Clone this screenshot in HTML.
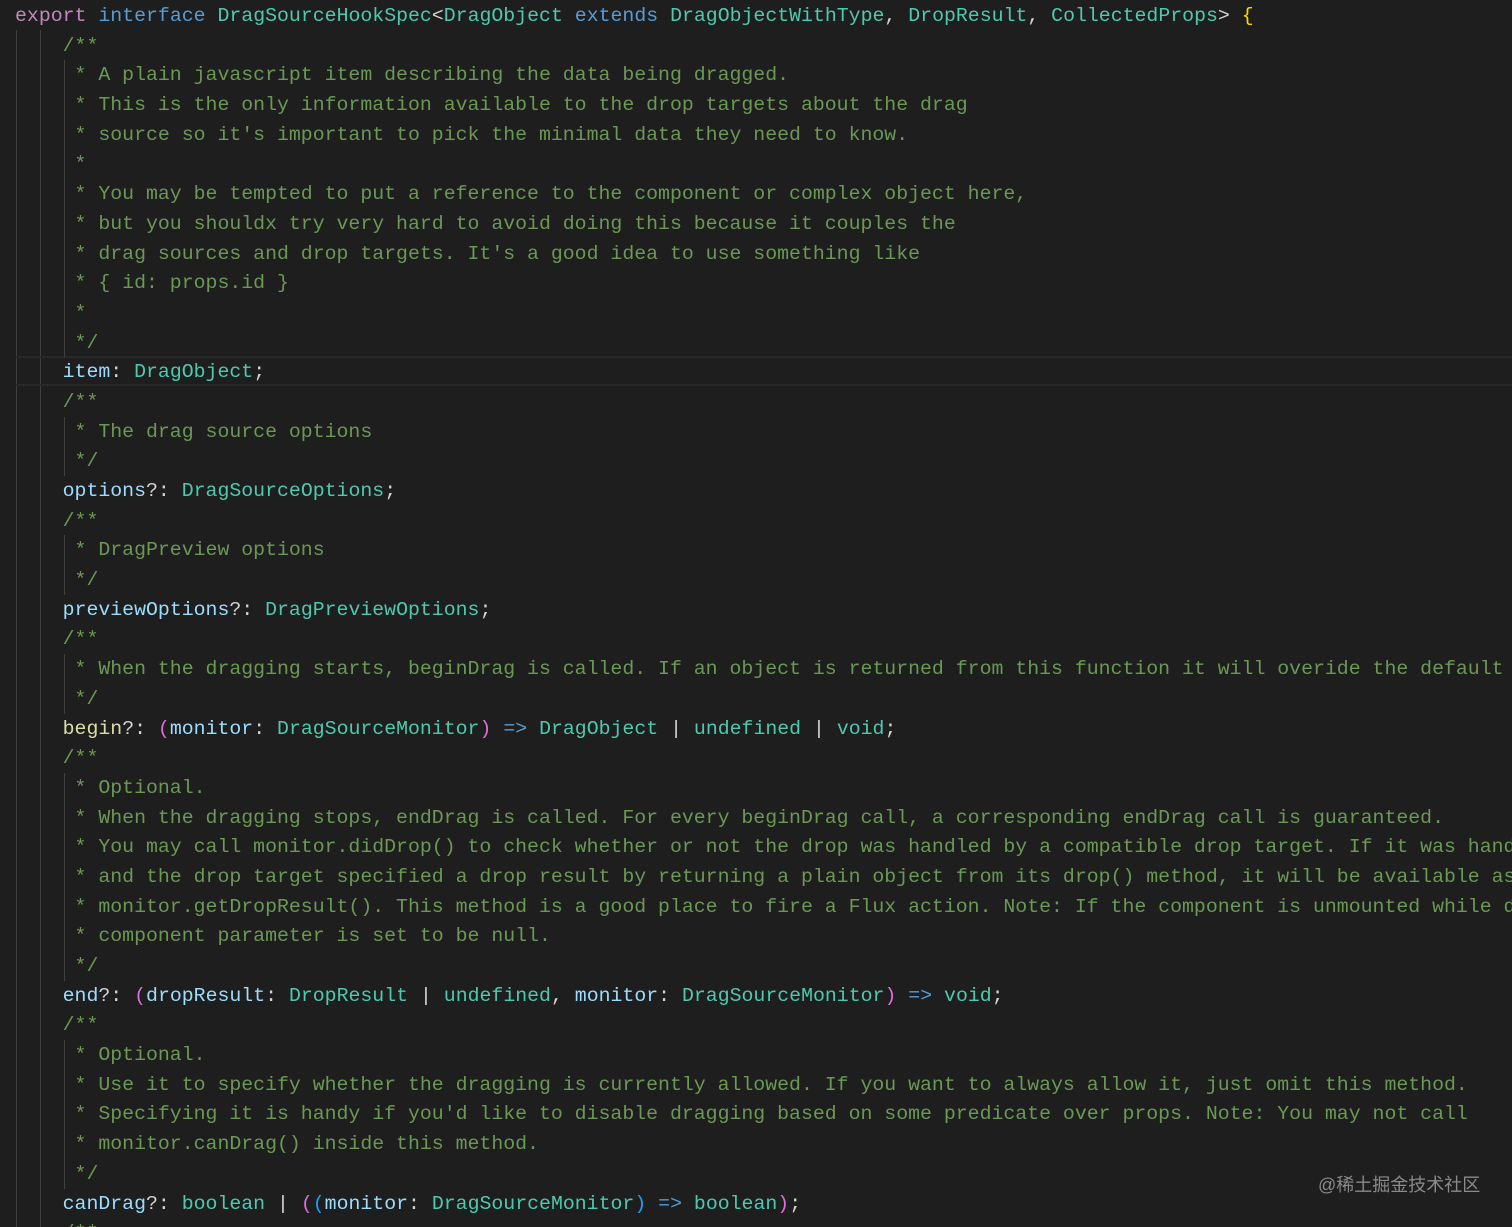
<!DOCTYPE html>
<html><head><meta charset="utf-8"><style>
html,body{margin:0;padding:0;background:#1e1e1e;width:1512px;height:1227px;overflow:hidden;position:relative}
#c{position:absolute;left:15px;top:1px;right:0;height:1226px;overflow:hidden;font-family:"Liberation Mono",monospace;font-size:19.85px;color:#d4d4d4}
.l{height:29.7px;line-height:29.7px;white-space:pre;position:relative}
.g{position:absolute;top:0;bottom:0;width:1px;background:#404040}
.cm{color:#6a9955}.kw{color:#c586c0}.bl{color:#569cd6}.ty{color:#4ec9b0}.pr{color:#9cdcfe}.fn{color:#dcdcaa}.br{color:#ffd700}.pk{color:#da70d6}.b2{color:#179fff}
.cur{position:absolute;left:16px;right:0;top:356px;height:30px;border-top:2px solid #282828;border-bottom:2px solid #282828;box-sizing:border-box}
#wm{position:absolute;left:1318px;top:1171px;font-family:"Liberation Sans","Noto Sans CJK SC",sans-serif;font-size:18px;color:#8a8a8a}
</style></head><body>
<div style="position:absolute;left:16px;top:30px;bottom:0;width:1px;background:#404040"></div>
<div style="position:absolute;left:40px;top:30px;bottom:0;width:1px;background:#404040"></div>
<div class="cur"></div>
<div id="c">
<div class="l"><span class="kw">export</span> <span class="bl">interface</span> <span class="ty">DragSourceHookSpec</span>&lt;<span class="ty">DragObject</span> <span class="bl">extends</span> <span class="ty">DragObjectWithType</span>, <span class="ty">DropResult</span>, <span class="ty">CollectedProps</span>&gt; <span class="br">{</span></div>
<div class="l cm">    /**</div>
<div class="l cm"><i class="g" style="left:49px"></i>     * A plain javascript item describing the data being dragged.</div>
<div class="l cm"><i class="g" style="left:49px"></i>     * This is the only information available to the drop targets about the drag</div>
<div class="l cm"><i class="g" style="left:49px"></i>     * source so it's important to pick the minimal data they need to know.</div>
<div class="l cm"><i class="g" style="left:49px"></i>     *</div>
<div class="l cm"><i class="g" style="left:49px"></i>     * You may be tempted to put a reference to the component or complex object here,</div>
<div class="l cm"><i class="g" style="left:49px"></i>     * but you shouldx try very hard to avoid doing this because it couples the</div>
<div class="l cm"><i class="g" style="left:49px"></i>     * drag sources and drop targets. It's a good idea to use something like</div>
<div class="l cm"><i class="g" style="left:49px"></i>     * { id: props.id }</div>
<div class="l cm"><i class="g" style="left:49px"></i>     *</div>
<div class="l cm"><i class="g" style="left:49px"></i>     */</div>
<div class="l">    <span class="pr">item</span>: <span class="ty">DragObject</span>;</div>
<div class="l cm">    /**</div>
<div class="l cm"><i class="g" style="left:49px"></i>     * The drag source options</div>
<div class="l cm"><i class="g" style="left:49px"></i>     */</div>
<div class="l">    <span class="pr">options</span>?: <span class="ty">DragSourceOptions</span>;</div>
<div class="l cm">    /**</div>
<div class="l cm"><i class="g" style="left:49px"></i>     * DragPreview options</div>
<div class="l cm"><i class="g" style="left:49px"></i>     */</div>
<div class="l">    <span class="pr">previewOptions</span>?: <span class="ty">DragPreviewOptions</span>;</div>
<div class="l cm">    /**</div>
<div class="l cm"><i class="g" style="left:49px"></i>     * When the dragging starts, beginDrag is called. If an object is returned from this function it will overide the default</div>
<div class="l cm"><i class="g" style="left:49px"></i>     */</div>
<div class="l">    <span class="fn">begin</span>?: <span class="pk">(</span><span class="pr">monitor</span>: <span class="ty">DragSourceMonitor</span><span class="pk">)</span> <span class="bl">=&gt;</span> <span class="ty">DragObject</span> | <span class="ty">undefined</span> | <span class="ty">void</span>;</div>
<div class="l cm">    /**</div>
<div class="l cm"><i class="g" style="left:49px"></i>     * Optional.</div>
<div class="l cm"><i class="g" style="left:49px"></i>     * When the dragging stops, endDrag is called. For every beginDrag call, a corresponding endDrag call is guaranteed.</div>
<div class="l cm"><i class="g" style="left:49px"></i>     * You may call monitor.didDrop() to check whether or not the drop was handled by a compatible drop target. If it was handled</div>
<div class="l cm"><i class="g" style="left:49px"></i>     * and the drop target specified a drop result by returning a plain object from its drop() method, it will be available as</div>
<div class="l cm"><i class="g" style="left:49px"></i>     * monitor.getDropResult(). This method is a good place to fire a Flux action. Note: If the component is unmounted while dragging</div>
<div class="l cm"><i class="g" style="left:49px"></i>     * component parameter is set to be null.</div>
<div class="l cm"><i class="g" style="left:49px"></i>     */</div>
<div class="l">    <span class="pr">end</span>?: <span class="pk">(</span><span class="pr">dropResult</span>: <span class="ty">DropResult</span> | <span class="ty">undefined</span>, <span class="pr">monitor</span>: <span class="ty">DragSourceMonitor</span><span class="pk">)</span> <span class="bl">=&gt;</span> <span class="ty">void</span>;</div>
<div class="l cm">    /**</div>
<div class="l cm"><i class="g" style="left:49px"></i>     * Optional.</div>
<div class="l cm"><i class="g" style="left:49px"></i>     * Use it to specify whether the dragging is currently allowed. If you want to always allow it, just omit this method.</div>
<div class="l cm"><i class="g" style="left:49px"></i>     * Specifying it is handy if you'd like to disable dragging based on some predicate over props. Note: You may not call</div>
<div class="l cm"><i class="g" style="left:49px"></i>     * monitor.canDrag() inside this method.</div>
<div class="l cm"><i class="g" style="left:49px"></i>     */</div>
<div class="l">    <span class="pr">canDrag</span>?: <span class="ty">boolean</span> | <span class="pk">(</span><span class="b2">(</span><span class="pr">monitor</span>: <span class="ty">DragSourceMonitor</span><span class="b2">)</span> <span class="bl">=&gt;</span> <span class="ty">boolean</span><span class="pk">)</span>;</div>
<div class="l cm">    /**</div>
</div>
<div id="wm">@稀土掘金技术社区</div>
</body></html>
